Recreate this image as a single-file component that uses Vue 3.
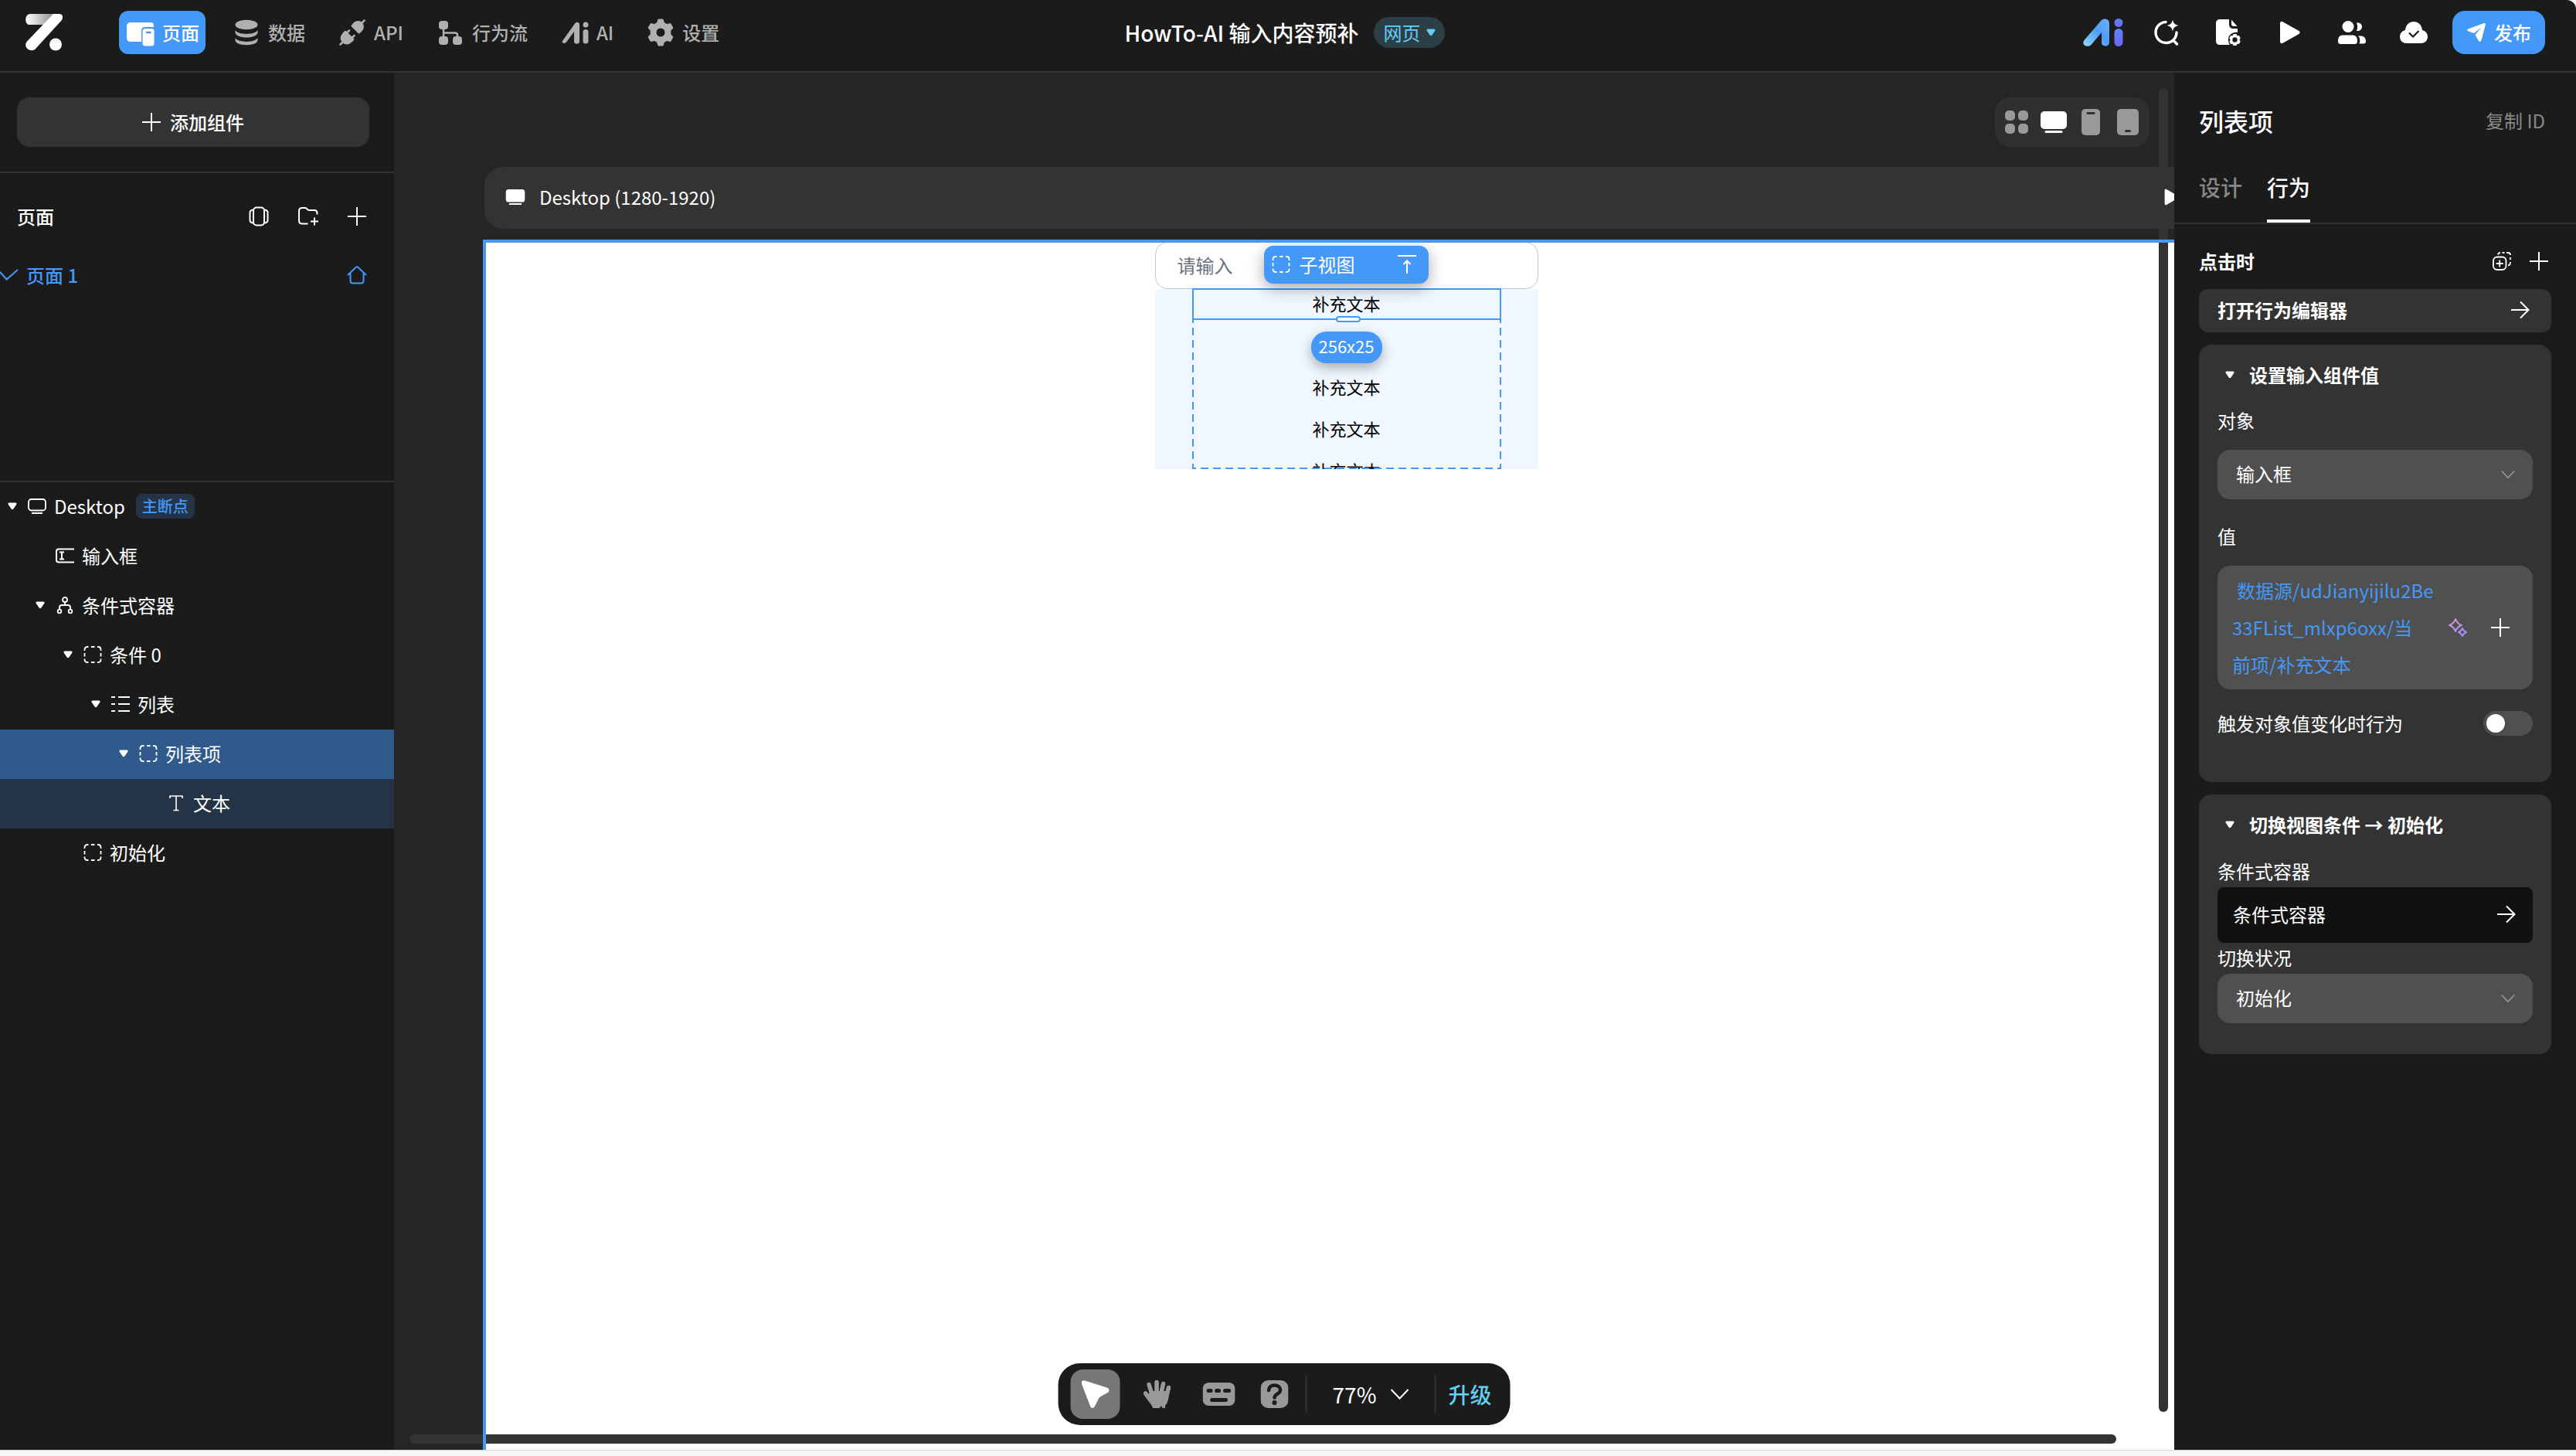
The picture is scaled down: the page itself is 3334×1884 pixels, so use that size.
<script setup>
import { ref } from 'vue'

const navItems = [
  { label: '页面', icon: 'pages' },
  { label: '数据', icon: 'database' },
  { label: 'API', icon: 'plug' },
  { label: '行为流', icon: 'flow' },
  { label: 'AI', icon: 'ai-mono' },
  { label: '设置', icon: 'gear' },
]

const treeNodes = [
  { label: 'Desktop', icon: 'monitor-line', level: 0, open: true, tag: '主断点' },
  { label: '输入框', icon: 'input', level: 1 },
  { label: '条件式容器', icon: 'branch', level: 1, open: true },
  { label: '条件 0', icon: 'dashed', level: 2, open: true },
  { label: '列表', icon: 'list', level: 3, open: true },
  { label: '列表项', icon: 'dashed', level: 4, open: true, state: 'selected' },
  { label: '文本', icon: 'text', level: 5, state: 'child' },
  { label: '初始化', icon: 'dashed', level: 2 },
]

const headerActions = ['search-star', 'file-gear', 'play', 'people', 'cloud']
const devices = ['grid', 'monitor', 'phone', 'tablet']
const rows = ['补充文本', '', '补充文本', '补充文本', '补充文本']
const valueLines = ['数据源/udJianyijilu2Be', '33FList_mlxp6oxx/当', '前项/补充文本']

const activeNav = ref('页面')
const activeDevice = ref('monitor')
const target = ref('输入框')
const targetState = ref('初始化')
const triggerOnChange = ref(false)
</script>

<template>
  <div class="app">
    <!-- Icon sprite -->
    <svg class="sprite" aria-hidden="true">
      <defs>
        <linearGradient id="g-ai" x1="0" y1="1" x2="1" y2="0">
          <stop offset="0" stop-color="#8fdcfb" />
          <stop offset="0.55" stop-color="#4f9cf8" />
          <stop offset="1" stop-color="#6fb0fb" />
        </linearGradient>
        <linearGradient id="g-ai2" x1="0" y1="0" x2="0" y2="1">
          <stop offset="0" stop-color="#5a86f8" />
          <stop offset="1" stop-color="#6f66f5" />
        </linearGradient>
        <linearGradient id="g-logo" x1="0" y1="0" x2="1" y2="0">
          <stop offset="0" stop-color="#ffffff" />
          <stop offset="1" stop-color="#8a8a8a" />
        </linearGradient>
        <linearGradient id="g-spark" x1="0" y1="0" x2="1" y2="1">
          <stop offset="0" stop-color="#cf9ae0" />
          <stop offset="1" stop-color="#9d8cf0" />
        </linearGradient>
      </defs>
      <symbol id="i-plus" viewBox="0 0 24 24"><path d="M12 0v24M0 12h24" stroke="currentColor" stroke-width="2" /></symbol>
      <symbol id="i-caret" viewBox="0 0 12 10"><path d="M2 .5h8c1.600 0 2 1.200 1.200 2.200L7.400 8.400c-.8 1-2 1-2.800 0L.8 2.700C0 1.700.4.5 2 .5z" fill="currentColor" /></symbol>
      <symbol id="i-chevron" viewBox="0 0 24 14"><path d="M1 1l11 11.500L23 1" stroke="currentColor" stroke-width="2" fill="none" /></symbol>
      <symbol id="i-arrow" viewBox="0 0 24 24"><path d="M0 12h23M12 1.500L22.500 12 12 22.500" stroke="currentColor" stroke-width="2" fill="none" /></symbol>
      <symbol id="i-pages" viewBox="0 0 36 36">
        <path d="M5 5h26c2.500 0 4 1.500 4 4v2H24c-3.500 0-5 2-5 5v14H5c-3 0-5-2-5-5V10c0-3 2-5 5-5z" fill="currentColor" />
        <rect x="20.500" y="13" width="15" height="22.500" rx="3.500" fill="currentColor" />
        <path d="M25 18h6.500" stroke="#4398f8" stroke-width="2.500" />
      </symbol>
      <symbol id="i-database" viewBox="0 0 36 36">
        <ellipse cx="18" cy="8" rx="14.500" ry="6.200" fill="currentColor" />
        <path d="M3.500 15c4 6.500 25 6.500 29 0v3c0 3.800-6.500 6.500-14.500 6.500S3.500 21.800 3.500 18zM3.500 25c4 6.500 25 6.500 29 0v3c0 3.800-6.500 6.200-14.500 6.200S3.500 31.800 3.500 28z" fill="currentColor" />
      </symbol>
      <symbol id="i-plug" viewBox="0 0 36 36">
        <path d="M33.500 2.500l-4 4M2.500 33.500l4-4" stroke="currentColor" stroke-width="2.500" stroke-linecap="round" />
        <path d="M17.500 9.500l2-2.500c3-3.500 7.500-4 10.500-1s2.500 7.500-1 10.500l-2.500 2z" fill="currentColor" stroke="currentColor" stroke-width="2" stroke-linejoin="round" />
        <path d="M9 17l10 10-2.500 2.500c-3.500 3.200-7.500 3.500-10.500.5s-2.500-7 .5-10.500zM11 18.500l3-3M17.500 25l3-3" fill="currentColor" stroke="currentColor" stroke-width="2.500" stroke-linejoin="round" stroke-linecap="round" />
      </symbol>
      <symbol id="i-flow" viewBox="0 0 36 36">
        <rect x="3" y="3" width="12" height="11" rx="4" fill="currentColor" />
        <rect x="3" y="23" width="12" height="11" rx="4" fill="currentColor" />
        <rect x="21" y="23" width="12" height="11" rx="4" fill="currentColor" />
        <path d="M9 14v9M9 18.500h15c2 0 3 1 3 3V23" stroke="currentColor" stroke-width="2.500" fill="none" />
      </symbol>
      <symbol id="i-ai-mono" viewBox="0 0 36 36">
        <path d="M2 29L18 6.500c2.200-3 6-1.800 6 1.500v22c0 3.500-7 3.500-7 0V17L7 30.500c-2.500 3-6.500.8-5-1.500z" fill="currentColor" />
        <circle cx="32" cy="8" r="3.500" fill="currentColor" /><rect x="28.500" y="14" width="7" height="18.500" rx="3.500" fill="currentColor" />
      </symbol>
      <symbol id="i-gear" viewBox="0 0 36 36">
        <path fill-rule="evenodd" d="M15 1h6l1.500 4.500 3.500 2 4.800-1 3.200 5.500-3.200 3.800v4.400l3.200 3.800-3.200 5.500-4.800-1-3.500 2L21 35h-6l-1.500-4.500-3.500-2-4.800 1L2 24l3.200-3.800v-4.400L2 12l3.200-5.500 4.800 1 3.500-2zM18 12a6 6 0 1 0 0 12 6 6 0 0 0 0-12z" fill="currentColor" stroke="currentColor" stroke-linejoin="round" />
      </symbol>
      <symbol id="i-search-star" viewBox="0 0 36 36">
        <path d="M17 4.500A13.500 13.500 0 1 0 31 18M26.500 28l5 5" stroke="currentColor" stroke-width="3.400" fill="none" stroke-linecap="round" />
        <path d="M26 1.500c1 4.500 2.500 6.500 7.500 7.500-5 1-6.500 3-7.500 7.500-1-4.500-2.500-6.500-7.500-7.500 5-1 6.500-3 7.500-7.500z" fill="currentColor" />
      </symbol>
      <symbol id="i-file-gear" viewBox="0 0 36 36">
        <path d="M7 1h12v6c0 4 2 6 6 6h5v5c-7-1-12 4-12 9 0 3 .5 5 2 7H7c-3 0-5-2-5-5V6c0-3 2-5 5-5z" fill="currentColor" />
        <path d="M22 1.500l7.500 8.500H25c-2 0-3-1-3-3z" fill="currentColor" />
        <path fill-rule="evenodd" d="M24.500 20h4l1 2.200 2.300-.3 2 3.400-1.400 2.200 1.400 2.200-2 3.400-2.300-.3-1 2.200h-4l-1-2.200-2.300.3-2-3.400 1.400-2.200-1.400-2.200 2-3.400 2.300.3zM26.500 24.300a3.200 3.200 0 1 0 0 6.400 3.200 3.200 0 0 0 0-6.400z" fill="currentColor" />
      </symbol>
      <symbol id="i-play" viewBox="0 0 36 36"><path d="M5 6.500c0-2.500 1.800-3.200 3.500-2.200l20.500 11.500c2.300 1.400 2.300 3 0 4.400L8.500 31.700C6.800 32.700 5 32 5 29.500z" fill="currentColor" /></symbol>
      <symbol id="i-people" viewBox="0 0 36 36">
        <circle cx="13" cy="10.500" r="7.500" fill="currentColor" />
        <path d="M6 21.500h13c4 0 6 3 6 7.500 0 3-1 4-3.500 4h-18C1 33 0 32 0 29c0-4.500 2-7.500 6-7.500zM24 5.500c4-.5 7 1.500 7 5s-3 6-7 5.500c1.500-3.500 1.500-7 0-10.500zM26 22.500h3c4.500 0 7 2.500 7 7 0 2-1 3-3 3h-5.500c1.500-4.500 1-7.500-1.500-10z" fill="currentColor" />
      </symbol>
      <symbol id="i-cloud" viewBox="0 0 36 36">
        <path d="M9 32c-5 0-9-3.500-9-8.500 0-4.500 3-7.500 7-8.500C7.500 8.500 12 4 18 4s10.500 4.500 11 11c4 1 7 4 7 8.500 0 5-4 8.500-9 8.500z" fill="currentColor" />
        <path d="M12 18.500l5 5 7.500-7.500" stroke="#1b1b1b" stroke-width="2.200" fill="none" />
      </symbol>
      <symbol id="i-send" viewBox="0 0 26 26">
        <path d="M2.500 8.500L22 1.200c2-.7 3.300.4 2.800 2.400L19.500 23c-.7 2.300-3 2.500-4 .3L11.500 16l8-9.500L10 14l-7.500-2.700c-2-.9-2-2 0-2.800z" fill="currentColor" />
      </symbol>
      <symbol id="i-grid" viewBox="0 0 36 36">
        <rect x="3" y="3" width="13" height="13" rx="5" fill="currentColor" /><rect x="20" y="3" width="13" height="13" rx="5" fill="currentColor" />
        <rect x="3" y="20" width="13" height="13" rx="5" fill="currentColor" /><rect x="20" y="20" width="13" height="13" rx="5" fill="currentColor" />
      </symbol>
      <symbol id="i-monitor" viewBox="0 0 36 36">
        <rect x="1" y="4" width="34" height="23" rx="5" fill="currentColor" /><path d="M8 30.500h20" stroke="currentColor" stroke-width="3" stroke-linecap="round" />
      </symbol>
      <symbol id="i-phone" viewBox="0 0 36 36">
        <rect x="6" y="1" width="24" height="34" rx="5" fill="currentColor" /><path d="M14 6.500h8" stroke="#2f2f2f" stroke-width="3" stroke-linecap="round" />
      </symbol>
      <symbol id="i-tablet" viewBox="0 0 36 36">
        <rect x="4" y="1" width="28" height="34" rx="5" fill="currentColor" /><path d="M15.500 29.500h5" stroke="#2f2f2f" stroke-width="3" stroke-linecap="round" />
      </symbol>
      <symbol id="i-slides" viewBox="0 0 26 26">
        <rect x="6" y="1.500" width="14" height="23" rx="4" stroke="currentColor" stroke-width="2" fill="none" />
        <path d="M5.500 4.500C2.500 5 1.500 6 1.500 8v10c0 2 1 3 4 3.500M20.500 4.500c3 .5 4 1.500 4 3.500v10c0 2-1 3-4 3.500" stroke="currentColor" stroke-width="2" fill="none" />
      </symbol>
      <symbol id="i-folder-plus" viewBox="0 0 26 26">
        <path d="M12.500 22.500H5c-2.500 0-4-1.500-4-4V6c0-2.500 1.500-4 4-4h4c2 0 3 3 5 3h6.500c2.500 0 4 1.500 4 4v1.500M21 14.500v10M16 19.500h10" stroke="currentColor" stroke-width="2" fill="none" />
      </symbol>
      <symbol id="i-home" viewBox="0 0 26 26">
        <path d="M1 13L11.500 3c1-.9 2-.9 3 0L25 13M4.500 10.500V20c0 2 1.500 3.500 3.500 3.500h10c2 0 3.500-1.500 3.500-3.500v-9.500" stroke="currentColor" stroke-width="2" fill="none" />
      </symbol>
      <symbol id="i-check" viewBox="0 0 24 16"><path d="M0 4l8.500 9.500L23 1" stroke="currentColor" stroke-width="2" fill="none" /></symbol>
      <symbol id="i-monitor-line" viewBox="0 0 24 24">
        <rect x="1" y="3" width="22" height="14.500" rx="3.500" stroke="currentColor" stroke-width="1.800" fill="none" /><path d="M5 21h14" stroke="currentColor" stroke-width="2" />
      </symbol>
      <symbol id="i-input" viewBox="0 0 24 24">
        <path d="M24 3.500H4c-2 0-3 1-3 3v11c0 2 1 3 3 3h20M5 7.500h6M5 16.500h6M8 7.500v9" stroke="currentColor" stroke-width="2" fill="none" />
      </symbol>
      <symbol id="i-branch" viewBox="0 0 24 24">
        <g stroke="currentColor" stroke-width="1.800" fill="none">
          <circle cx="12" cy="5" r="3" /><circle cx="5" cy="20" r="2.300" /><circle cx="19" cy="20" r="2.300" />
          <path d="M12 8v4M5 17.500V15c0-2 1-3 3-3h8c2 0 3 1 3 3v2.500" />
        </g>
      </symbol>
      <symbol id="i-dashed" viewBox="0 0 24 24">
        <path d="M1.500 7V5.500c0-2 1.500-3.500 3.500-3.500h1.500M10 2h4.500M18 2h1c2 0 3.500 1.500 3.500 3.500V7M22.500 10v4.500M22.500 17.500v1c0 2-1.500 3.500-3.500 3.500h-1M14.500 22H10M6.500 22H5c-2 0-3.500-1.500-3.500-3.500v-1M1.500 14.500V10" stroke="currentColor" stroke-width="1.800" fill="none" />
      </symbol>
      <symbol id="i-list" viewBox="0 0 24 24"><path d="M0 3h5M9 3h15M0 12h5M9 12h15M0 21h5M9 21h15" stroke="currentColor" stroke-width="2" /></symbol>
      <symbol id="i-text" viewBox="0 0 24 24"><path d="M4 6V3h16v3M12 3v18.500M8.500 21.500h7" stroke="currentColor" stroke-width="1.600" fill="none" /></symbol>
      <symbol id="i-copy-plus" viewBox="0 0 24 24">
        <rect x="1" y="6.500" width="16.500" height="16.500" rx="5" stroke="currentColor" stroke-width="1.800" fill="none" />
        <path d="M9.200 10.500v9M4.700 15h9" stroke="currentColor" stroke-width="1.800" />
        <path d="M7 3.500C7.500 1.500 8.500 1 10 1M12.500 1h3M18 1h2c2 0 3 1 3 3M23 7v3M23 13c0 3-1 4.500-3 4.500" stroke="currentColor" stroke-width="1.800" fill="none" />
      </symbol>
      <symbol id="i-sparkle" viewBox="0 0 26 26">
        <path d="M10 2c1.500 4.500 3.500 6.500 8 8-4.500 1.500-6.500 3.500-8 8-1.500-4.500-3.500-6.500-8-8 4.500-1.500 6.500-3.500 8-8zM19 14c1 2.700 2.200 4 5 5-2.800 1-4 2.300-5 5-1-2.700-2.200-4-5-5 2.800-1 4-2.300 5-5z" stroke="url(#g-spark)" stroke-width="2" fill="none" stroke-linejoin="round" />
      </symbol>
      <symbol id="i-to-top" viewBox="0 0 24 24"><path d="M0 1h24M12 24V7.500M7.500 12L12 7.500l4.500 4.500" stroke="currentColor" stroke-width="2" fill="none" /></symbol>
      <symbol id="i-cursor" viewBox="0 0 36 36"><path d="M.3 4.500C-.5 1.500 1.500-.5 4.500.5L33 9.500c3.500 1.200 4 4.500 1 6.500l-9 5c-1.500 1-2.200 1.700-3 3.500l-4.500 9c-1.500 3.200-5 3.200-6 0z" fill="currentColor" /></symbol>
      <symbol id="i-hand" viewBox="0 0 36 36">
        <path d="M7.500 5.500L12 20M17.500 2.500V19M26 4.500L22.500 20M33 9.500l-3.500 14M3 17l9 12" stroke="currentColor" stroke-width="5.600" stroke-linecap="round" />
        <path d="M9 14h20l4 6c-.5 7-2 10-4.500 12.500L28.500 36H25l-1.500-3-2.500 3h-8.500L10 30.500 5 22z" fill="currentColor" />
      </symbol>
      <symbol id="i-keyboard" viewBox="0 0 42 36">
        <rect y="3" width="42" height="30" rx="8" fill="currentColor" />
        <path d="M7.500 13.500h3M18 13.500h3M29 13.500h5M12 25.500h18" stroke="#1b1b1b" stroke-width="5" stroke-linecap="round" />
      </symbol>
      <symbol id="i-question" viewBox="0 0 36 36">
        <rect width="36" height="36" rx="10" fill="currentColor" />
        <path d="M10.500 13c0-4 3-6.500 7.500-6.500s7.500 2.500 7.500 6.200c0 5-7.500 4.800-7.500 9.800" stroke="#1b1b1b" stroke-width="4.500" fill="none" stroke-linecap="round" />
        <circle cx="18" cy="29" r="3" fill="#1b1b1b" />
      </symbol>
    </svg>

    <header class="topbar">
      <div class="topbar-left">
        <svg class="logo" viewBox="0 0 48 48">
          <path d="M6 0h32l-10 14H5C-1.500 14-1.500 0 6 0z" fill="url(#g-logo)" />
          <path d="M36 0h8c4 0 5 4 3 8L14 44c-2.500 4-8 4-11 1.500s-4-6-1-10z" fill="#fff" />
          <circle cx="39" cy="39.500" r="8" fill="#fff" />
        </svg>
        <nav class="nav">
          <button
            v-for="item in navItems"
            :key="item.label"
            class="nav-item"
            :class="{ active: activeNav === item.label }"
            @click="activeNav = item.label"
          >
            <svg class="icon-lg"><use :href="'#i-' + item.icon" /></svg>
            {{ item.label }}
          </button>
        </nav>
      </div>

      <div class="project">
        <h1 class="project-name">HowTo-AI 输入内容预补</h1>
        <button class="platform">网页 <svg class="caret"><use href="#i-caret" /></svg></button>
      </div>

      <div class="topbar-right">
        <button class="bare ai-btn" title="AI">
          <svg class="ai-logo" viewBox="0 0 52 36">
            <path d="M1.500 28L23 3c4-4.500 11-2.500 11 3v25c0 6-10 6-10 0V18L11 33.500C6 39-3 34 1.500 28z" fill="url(#g-ai)" />
            <circle cx="46" cy="5.500" r="5.500" fill="url(#g-ai2)" /><rect x="40.500" y="13" width="11" height="23" rx="5.500" fill="url(#g-ai2)" />
          </svg>
        </button>
        <button v-for="name in headerActions" :key="name" class="bare" :title="name">
          <svg class="icon-lg"><use :href="'#i-' + name" /></svg>
        </button>
        <button class="publish"><svg class="icon-md"><use href="#i-send" /></svg>发布</button>
      </div>
    </header>

    <main class="body">
      <!-- Left sidebar -->
      <aside class="sidebar">
        <div class="add-wrap">
          <button class="add-btn"><svg class="icon"><use href="#i-plus" /></svg>添加组件</button>
        </div>
        <section class="pages">
          <div class="pages-head">
            <h2>页面</h2>
            <button class="bare" title="slides"><svg class="icon-md"><use href="#i-slides" /></svg></button>
            <button class="bare" title="folder"><svg class="icon-md"><use href="#i-folder-plus" /></svg></button>
            <button class="bare" title="add"><svg class="icon"><use href="#i-plus" /></svg></button>
          </div>
          <a class="page-row" href="#">
            <svg class="check"><use href="#i-check" /></svg>
            <span>页面 1</span>
            <svg class="icon-md home"><use href="#i-home" /></svg>
          </a>
        </section>
        <ul class="tree">
          <li
            v-for="node in treeNodes"
            :key="node.label"
            class="tree-row"
            :class="node.state"
            :style="{ paddingLeft: 10 + node.level * 36 + 'px' }"
          >
            <svg class="caret" :class="{ hidden: !node.open }"><use href="#i-caret" /></svg>
            <svg class="icon"><use :href="'#i-' + node.icon" /></svg>
            <span>{{ node.label }}</span>
            <span v-if="node.tag" class="tag">{{ node.tag }}</span>
          </li>
        </ul>
      </aside>

      <!-- Canvas -->
      <section class="canvas">
        <div class="frame">
          <div class="frame-bar">
            <svg class="icon-md"><use href="#i-monitor" /></svg>
            <span>Desktop (1280-1920)</span>
            <svg class="icon-md frame-play"><use href="#i-play" /></svg>
          </div>
          <div class="page">
            <div class="preview">
              <input class="preview-input" type="text" placeholder="请输入" aria-label="请输入" />
              <div class="preview-list">
                <div class="list">
                  <p v-for="(row, i) in rows" :key="i">{{ row }}</p>
                </div>
                <svg class="dashes"><rect x="1" y="1" width="398" height="232" /></svg>
                <div class="selection"><span class="handle"></span></div>
                <span class="size-badge">256x25</span>
              </div>
              <div class="node-tag">
                <svg class="icon"><use href="#i-dashed" /></svg>
                <span>子视图</span>
                <svg class="icon to-top"><use href="#i-to-top" /></svg>
              </div>
            </div>
          </div>
        </div>

        <div class="scroll-y"></div>
        <div class="scroll-x"></div>

        <div class="devices">
          <button
            v-for="d in devices"
            :key="d"
            class="bare"
            :class="{ on: activeDevice === d }"
            :title="d"
            @click="activeDevice = d"
          >
            <svg class="icon-lg"><use :href="'#i-' + d" /></svg>
          </button>
        </div>

        <div class="toolbar">
          <button class="tool active" title="select"><svg class="icon-lg"><use href="#i-cursor" /></svg></button>
          <button class="tool" title="hand"><svg class="icon-lg"><use href="#i-hand" /></svg></button>
          <button class="tool" title="keyboard"><svg class="icon-kbd"><use href="#i-keyboard" /></svg></button>
          <button class="tool narrow" title="help"><svg class="icon-lg"><use href="#i-question" /></svg></button>
          <span class="divider"></span>
          <button class="zoom">77% <svg class="chevron"><use href="#i-chevron" /></svg></button>
          <span class="divider"></span>
          <button class="upgrade">升级</button>
        </div>
      </section>

      <!-- Properties panel -->
      <aside class="panel">
        <div class="panel-head">
          <h2>列表项</h2>
          <button class="copy-id">复制 ID</button>
        </div>
        <div class="tabs">
          <button class="tab">设计</button>
          <button class="tab active">行为</button>
        </div>

        <div class="panel-body">
          <div class="event">
            <h3>点击时</h3>
            <button class="bare" title="copy"><svg class="icon"><use href="#i-copy-plus" /></svg></button>
            <button class="bare" title="add"><svg class="icon"><use href="#i-plus" /></svg></button>
          </div>
          <button class="open-editor">打开行为编辑器 <svg class="icon"><use href="#i-arrow" /></svg></button>

          <div class="card card-input">
            <h3 class="card-title"><svg class="caret"><use href="#i-caret" /></svg>设置输入组件值</h3>
            <label class="label-loose" for="target">对象</label>
            <div class="select-box">
              <select id="target" v-model="target"><option>输入框</option></select>
              <svg class="select-arrow"><use href="#i-chevron" /></svg>
            </div>
            <div class="label-loose value-label">值</div>
            <div class="value-box">
              <div class="value-text"><div v-for="line in valueLines" :key="line">{{ line }}</div></div>
              <button class="bare" title="ai"><svg class="icon-md"><use href="#i-sparkle" /></svg></button>
              <button class="bare" title="add"><svg class="icon"><use href="#i-plus" /></svg></button>
            </div>
            <div class="switch-row">
              <label for="trigger">触发对象值变化时行为</label>
              <input id="trigger" v-model="triggerOnChange" class="switch" type="checkbox" />
            </div>
          </div>

          <div class="card card-switch">
            <h3 class="card-title"><svg class="caret"><use href="#i-caret" /></svg>切换视图条件 → 初始化</h3>
            <div class="label-tight">条件式容器</div>
            <button class="target-btn">条件式容器 <svg class="icon"><use href="#i-arrow" /></svg></button>
            <label class="label-tight" for="state">切换状况</label>
            <div class="select-box">
              <select id="state" v-model="targetState"><option>初始化</option></select>
              <svg class="select-arrow"><use href="#i-chevron" /></svg>
            </div>
          </div>
        </div>
      </aside>
    </main>
    <div class="window-edge"></div>
  </div>
</template>

<style>
body {
  margin: 0;
  background: #f6f6f6;
}
</style>

<style scoped>
.app {
  display: flex;
  flex-direction: column;
  height: 100vh;
  font-family: "Noto Sans CJK SC", "Noto Sans", sans-serif;
  font-size: 24px;
  line-height: 36px;
  color: #fff;
}

.app *,
.app *::after {
  box-sizing: border-box;
}

.sprite {
  position: absolute;
  width: 0;
  height: 0;
}

svg {
  display: block;
  flex: none;
}

button {
  font: inherit;
  color: inherit;
  border: 0;
  padding: 0;
  background: none;
  cursor: pointer;
}

h1, h2, h3, p, ul {
  margin: 0;
  padding: 0;
  font-weight: 500;
}

.bare { display: flex; align-items: center; }
.icon { width: 24px; height: 24px; }
.icon-md { width: 26px; height: 26px; }
.icon-lg { width: 36px; height: 36px; }
.icon-kbd { width: 42px; height: 36px; }
.caret { width: 12px; height: 10px; }
.hidden { visibility: hidden; }

/* Top bar */
.topbar {
  display: grid;
  grid-template-columns: 1fr auto 1fr;
  align-items: center;
  height: 94px;
  padding: 0 40px 8px 32px;
  background: #1b1b1b;
  border-bottom: 2px solid #333;
  border-top-right-radius: 12px;
  flex: none;
}

.topbar-left {
  display: flex;
  align-items: center;
  gap: 72px;
}

.logo { width: 50px; height: 48px; }

.nav {
  display: flex;
  gap: 25px;
}

.nav-item {
  display: flex;
  align-items: center;
  gap: 10px;
  height: 56px;
  padding: 0 8px 0 10px;
  border-radius: 12px;
  color: #b0b0b0;
  font-weight: 500;
}

.nav-item.active {
  background: #4398f8;
  color: #fff;
}

.project {
  display: flex;
  align-items: center;
  gap: 20px;
}

.project-name {
  font-size: 28px;
}

.platform {
  display: flex;
  align-items: center;
  gap: 8px;
  height: 40px;
  padding: 0 12px;
  border-radius: 20px;
  background: #2c3e46;
  color: #62cff5;
}

.topbar-right {
  display: flex;
  align-items: center;
  justify-content: flex-end;
  gap: 44px;
}

.ai-logo { width: 52px; height: 36px; }
.ai-btn { margin-right: -6px; }

.publish {
  display: flex;
  align-items: center;
  gap: 10px;
  height: 56px;
  padding: 0 18px;
  margin-left: -12px;
  border-radius: 16px;
  background: #4398f8;
  font-weight: 500;
}

/* Body */
.body {
  display: grid;
  grid-template-columns: 510px minmax(0, 1fr) 520px;
  flex: 1;
  min-height: 0;
}

.window-edge {
  flex: none;
  height: 8px;
  border-top: 1px solid #d8d8d8;
  background: #f6f6f6;
}

.sidebar {
  background: #1b1b1b;
}

.add-wrap {
  padding: 32px 32px 32px 22px;
  border-bottom: 2px solid #333;
}

.add-btn {
  display: flex;
  align-items: center;
  justify-content: center;
  gap: 12px;
  width: 100%;
  height: 64px;
  border-radius: 16px;
  background: #333;
  font-weight: 500;
}

.pages {
  height: 400px;
  padding-top: 36px;
  border-bottom: 2px solid #333;
}

.pages-head {
  display: flex;
  align-items: center;
  gap: 38px;
  height: 40px;
  padding: 0 36px 0 22px;
}

.pages-head h2 {
  flex: 1;
  font-size: 24px;
}

.page-row {
  display: flex;
  align-items: center;
  gap: 10px;
  height: 64px;
  margin-top: 24px;
  padding-right: 35px;
  color: #4398f8;
  font-weight: 500;
  text-decoration: none;
}

.check { width: 24px; height: 16px; }
.home { margin-left: auto; }

.tree {
  list-style: none;
}

.tree-row {
  display: flex;
  align-items: center;
  height: 64px;
  padding-bottom: 2px;
  font-weight: 400;
}

.tree-row .icon { margin: 0 10px 0 14px; }
.tree-row.selected { background: #305a8b; }
.tree-row.child { background: #243446; }

.tag {
  height: 32px;
  margin-left: 14px;
  padding: 0 8px;
  border-radius: 8px;
  background: #243446;
  color: #4398f8;
  font-size: 20px;
  font-weight: 500;
  line-height: 32px;
}

/* Canvas */
.canvas {
  position: relative;
  overflow: hidden;
  background: #252525;
}

.frame {
  display: flex;
  flex-direction: column;
  height: 100%;
  margin-right: -46px;
  padding: 122px 0 0 115px;
}

.frame-bar {
  position: relative;
  z-index: 2;
  display: flex;
  align-items: center;
  gap: 18px;
  height: 80px;
  margin-left: 2px;
  padding: 0 36px 2px 27px;
  border-radius: 24px;
  background: #333;
  flex: none;
}

.frame-play { margin-left: auto; }

.page {
  position: relative;
  flex: 1;
  margin-top: 14px;
  padding-top: 3px;
  background: #fff;
}

.page::after {
  content: "";
  position: absolute;
  z-index: 3;
  inset: 0;
  border: solid #4398f8;
  border-width: 4px 0 0 4px;
  pointer-events: none;
}

.preview {
  position: relative;
  width: 496px;
  margin: 0 auto;
  color: #000;
}

.preview-input {
  display: block;
  width: 100%;
  height: 61px;
  padding: 0 28px 2px;
  border: 1px solid #bfc3dc;
  border-radius: 16px;
  background: #fff;
  font: inherit;
}

.preview-input::placeholder { color: #6b7280; opacity: 1; }

.preview-list {
  position: relative;
  height: 233px;
  padding: 0 48px;
  background: #f0f7ff;
}

.list {
  height: 100%;
  overflow: hidden;
}

.list p {
  height: 38px;
  margin-bottom: 16px;
  font-size: 22px;
  font-weight: 400;
  line-height: 36px;
  text-align: center;
}

.dashes {
  position: absolute;
  top: -1px;
  left: 48px;
  width: 400px;
  height: 234px;
}

.dashes rect {
  fill: none;
  stroke: #4398f8;
  stroke-width: 2px;
  stroke-dasharray: 10 6;
}

.selection {
  position: absolute;
  top: -1px;
  left: 48px;
  width: 400px;
  height: 41px;
  border: 2px solid #4398f8;
}

.handle {
  position: absolute;
  bottom: -5px;
  left: 50%;
  width: 32px;
  height: 8px;
  margin-left: -14px;
  border: 2px solid #4398f8;
  border-radius: 4px;
  background: #fff;
}

.size-badge {
  position: absolute;
  top: 55px;
  left: 50%;
  transform: translateX(-50%);
  height: 41px;
  padding: 0 10px;
  border-radius: 20px;
  background: #4398f8;
  color: #fff;
  font-size: 22px;
  line-height: 36px;
  box-shadow: 0 6px 16px rgba(0, 0, 0, 0.3);
}

.node-tag {
  position: absolute;
  top: 5px;
  left: 141px;
  display: flex;
  align-items: center;
  width: 213px;
  height: 49px;
  padding: 0 16px 2px 10px;
  border-radius: 12px;
  background: #4398f8;
  color: #fff;
  box-shadow: 0 6px 20px rgba(0, 0, 0, 0.35);
}

.node-tag span { margin-left: 12px; }
.to-top { margin-left: auto; }

.scroll-y,
.scroll-x {
  position: absolute;
  z-index: 1;
  border-radius: 6px;
  background: #333;
}

.scroll-y { top: 20px; right: 8px; bottom: 49px; width: 12px; }
.scroll-x { left: 20px; right: 75px; bottom: 8px; height: 12px; }

.devices {
  position: absolute;
  top: 32px;
  right: 32px;
  display: flex;
  align-items: center;
  gap: 12px;
  height: 64px;
  padding: 0 10px;
  border-radius: 20px;
  background: #2f2f2f;
  color: #999;
}

.devices .on { color: #fff; }

.toolbar {
  position: absolute;
  z-index: 4;
  bottom: 32px;
  left: 50%;
  transform: translateX(-50%);
  display: flex;
  align-items: center;
  height: 80px;
  padding: 0 24px 0 16px;
  border-radius: 28px;
  background: #1b1b1b;
}

.tool {
  display: flex;
  align-items: center;
  justify-content: center;
  width: 64px;
  height: 64px;
  margin-right: 16px;
  border-radius: 16px;
  color: #999;
}

.tool.active { background: #777; color: #fff; }
.tool.narrow { width: 48px; }
.divider { width: 2px; height: 48px; background: #333; }

.zoom {
  display: flex;
  align-items: center;
  gap: 18px;
  padding: 0 33px;
  font-size: 28px;
}

.chevron { width: 24px; height: 14px; }

.upgrade {
  padding-left: 16px;
  color: #62cff5;
  font-size: 28px;
  font-weight: 500;
}

/* Properties panel */
.panel {
  background: #1b1b1b;
}

.panel-head {
  display: flex;
  align-items: center;
  justify-content: space-between;
  height: 128px;
  padding: 0 40px 4px 32px;
}

.panel-head h2 { font-size: 32px; }
.copy-id { color: #888; }

.tabs {
  display: flex;
  gap: 32px;
  height: 68px;
  padding-left: 32px;
  border-bottom: 2px solid #333;
}

.tab {
  padding-bottom: 22px;
  border-bottom: 4px solid transparent;
  color: #888;
  font-size: 28px;
  font-weight: 500;
}

.tab.active {
  border-color: #fff;
  color: #fff;
}

.panel-body {
  display: flex;
  flex-direction: column;
  gap: 16px;
  padding: 12px 32px;
}

.event {
  display: flex;
  align-items: center;
  gap: 24px;
  height: 72px;
  padding-right: 4px;
  margin-bottom: -16px;
}

.event h3 { flex: 1; }

.event h3,
.card-title {
  font-size: 24px;
  font-weight: 700;
}

.open-editor {
  display: flex;
  align-items: center;
  justify-content: space-between;
  height: 56px;
  padding: 0 28px 2px 24px;
  border-radius: 12px;
  background: #333;
  font-weight: 700;
}

.card {
  padding: 0 24px;
  border-radius: 16px;
  background: #333;
}

.card-input { padding-bottom: 60px; }
.card-switch { padding-bottom: 40px; }

.card-title {
  display: flex;
  align-items: center;
  gap: 19px;
  height: 80px;
  padding: 0 0 2px 10px;
}

.label-loose {
  display: block;
  margin-bottom: 20px;
}

.value-label { margin-top: 30px; }

.label-tight {
  display: block;
  height: 40px;
  line-height: 38px;
}

.select-box { position: relative; }

select {
  display: block;
  width: 100%;
  height: 64px;
  padding: 0 24px 2px;
  border: 0;
  border-radius: 16px;
  background: #505050;
  color: #fff;
  font: inherit;
  appearance: none;
}

.select-arrow {
  position: absolute;
  top: 26px;
  right: 23px;
  width: 18px;
  height: 12px;
  color: #999;
  pointer-events: none;
}

.value-box {
  display: flex;
  align-items: center;
  gap: 30px;
  height: 160px;
  padding: 0 30px 0 19px;
  border-radius: 16px;
  background: #505050;
}

.value-text {
  flex: 1;
  min-width: 0;
  color: #4398f8;
  line-height: 48px;
  white-space: nowrap;
}

.value-text div:first-child { padding-left: 6px; }

.switch-row {
  display: flex;
  align-items: center;
  justify-content: space-between;
  margin: 26px 0 -2px;
}

.switch {
  width: 64px;
  height: 32px;
  margin: 0;
  padding: 4px;
  border-radius: 16px;
  background: #505050;
  appearance: none;
}

.switch::before {
  content: "";
  display: block;
  width: 24px;
  height: 24px;
  border-radius: 50%;
  background: #fff;
  box-shadow: 0 2px 4px rgba(0, 35, 11, 0.2);
}

.switch:checked { background: #4398f8; }
.switch:checked::before { margin-left: 32px; }

.target-btn {
  display: flex;
  align-items: center;
  justify-content: space-between;
  width: 100%;
  height: 72px;
  padding: 0 22px 2px 20px;
  border-radius: 8px;
  background: #111;
}
</style>
